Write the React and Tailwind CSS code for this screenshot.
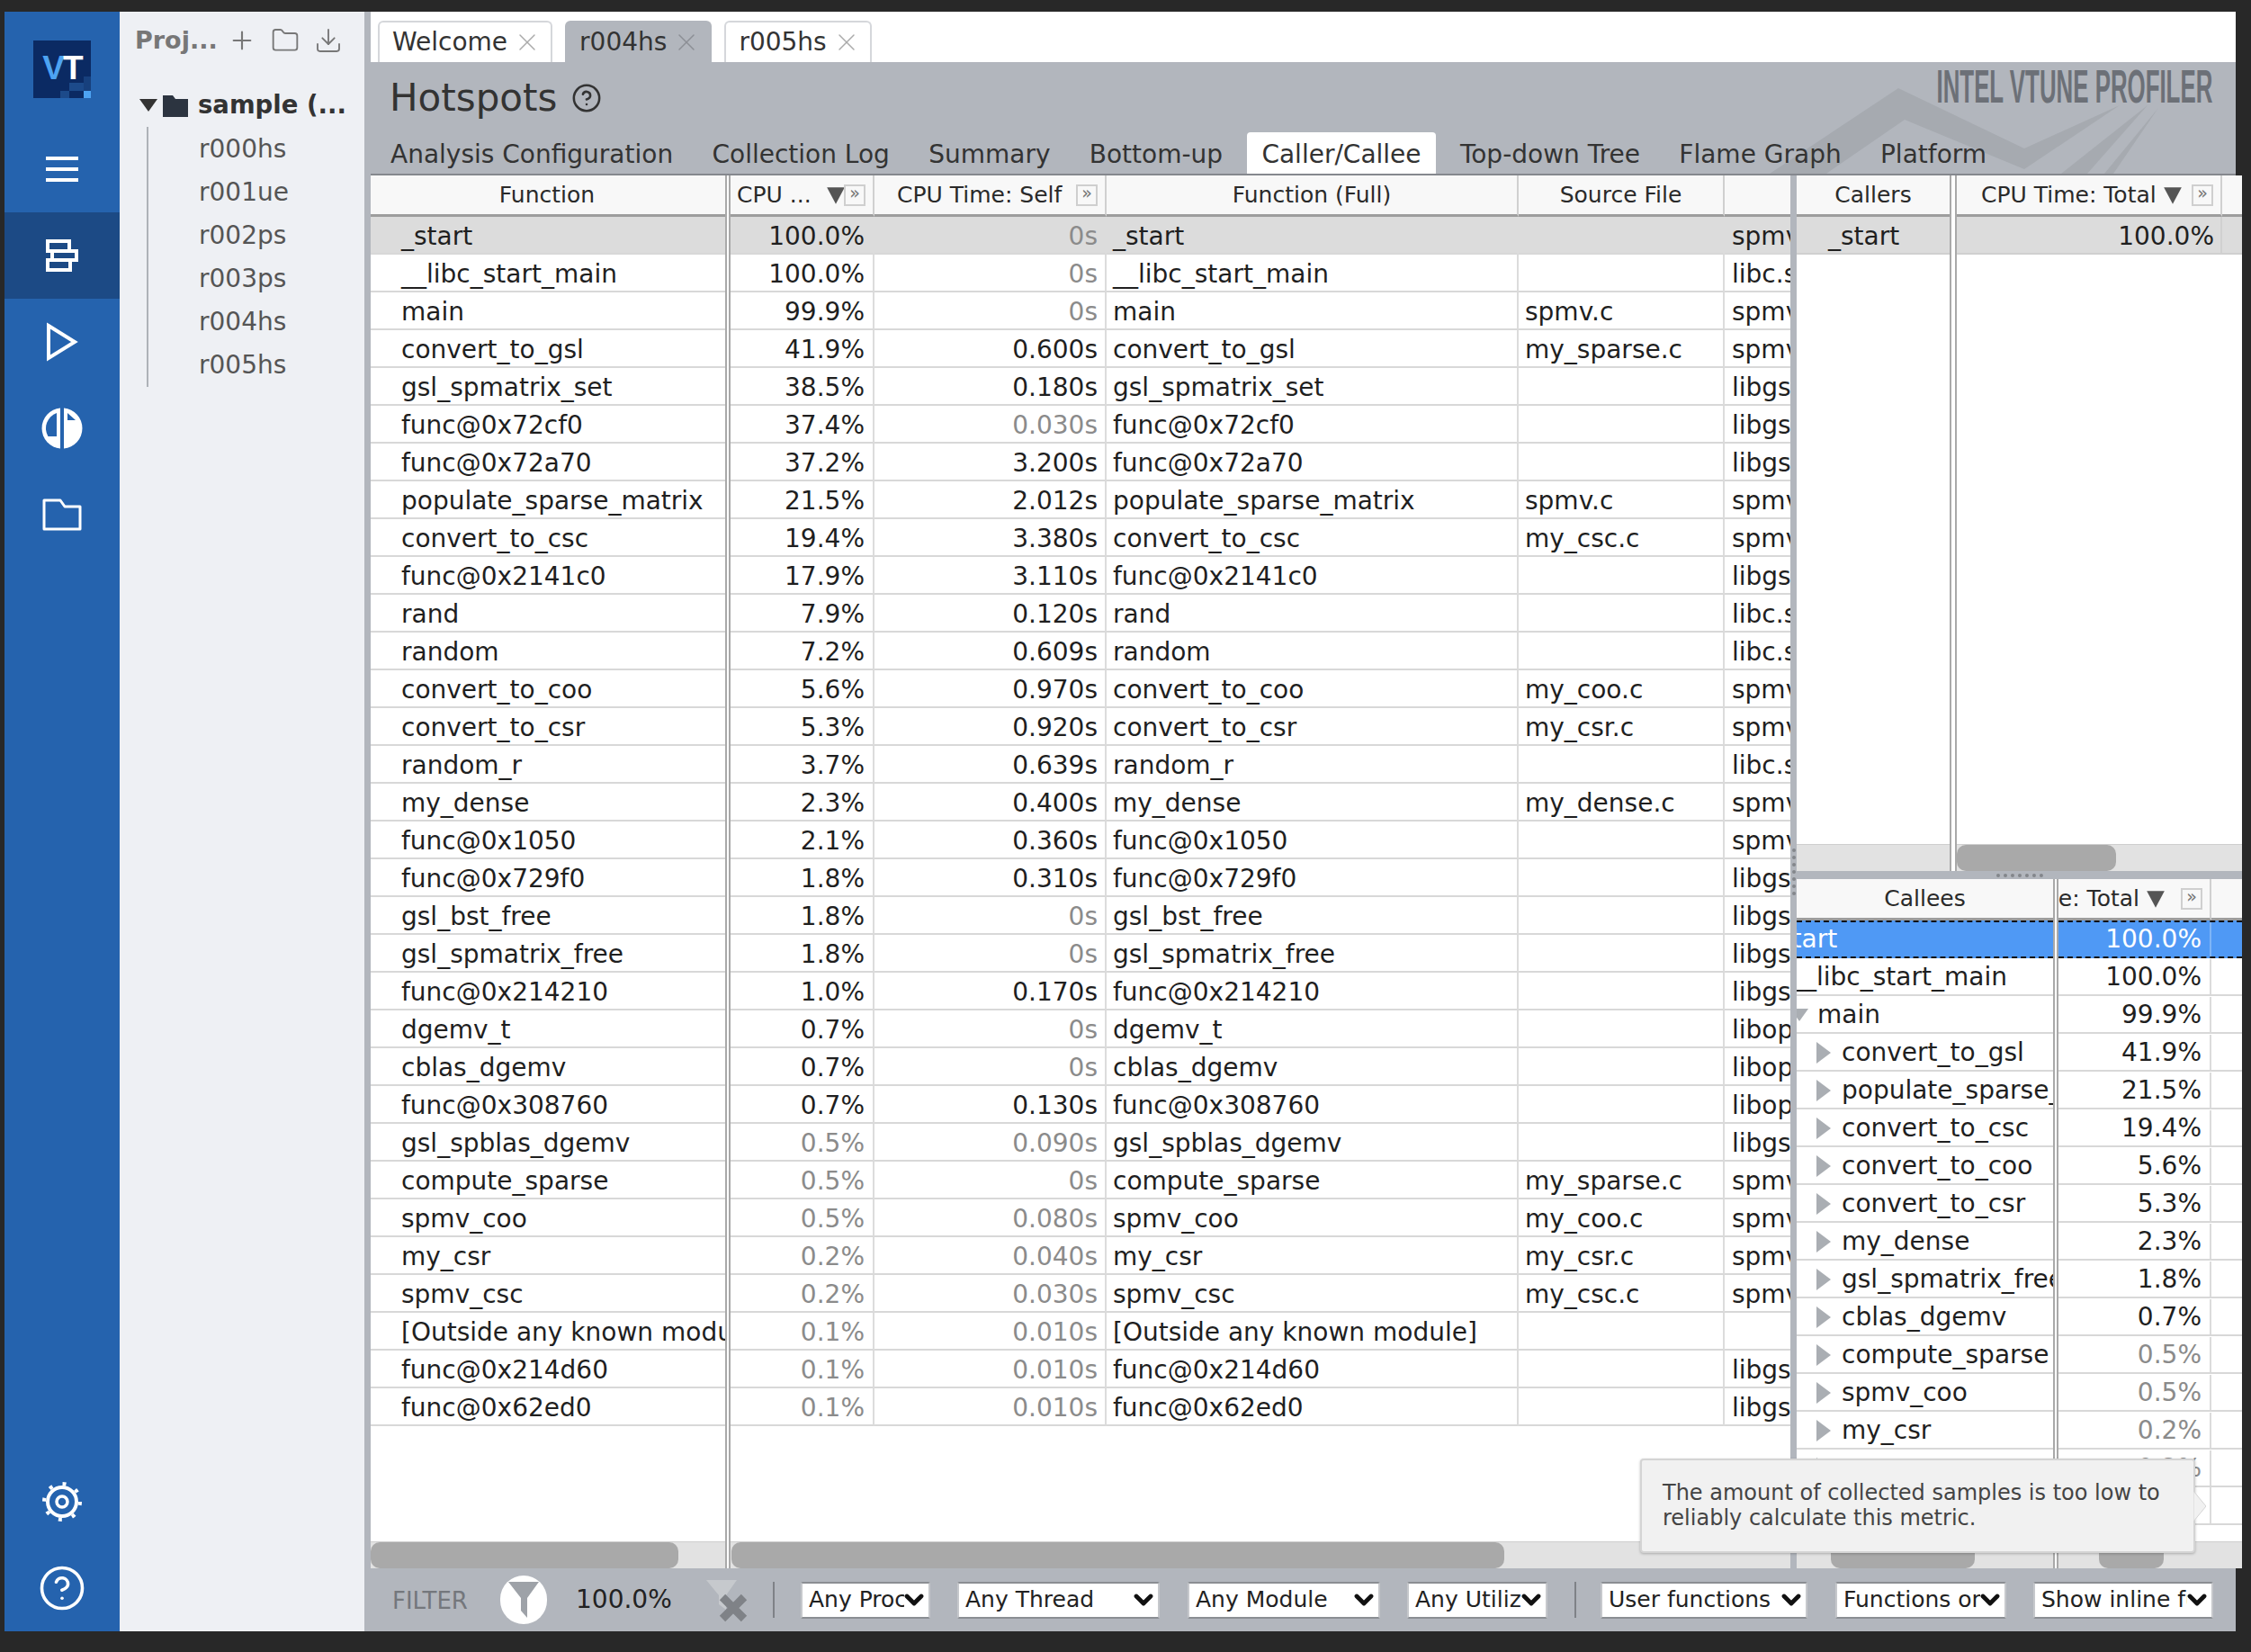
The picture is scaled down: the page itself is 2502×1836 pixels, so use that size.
import React from "react";
import { X, Plus, Folder, Download, CircleHelp, ChevronDown } from "lucide-react";

const rows = [
  ["_start","100.0%",0,"0s",1,"","spmv"],
  ["__libc_start_main","100.0%",0,"0s",1,"","libc.so"],
  ["main","99.9%",0,"0s",1,"spmv.c","spmv"],
  ["convert_to_gsl","41.9%",0,"0.600s",0,"my_sparse.c","spmv"],
  ["gsl_spmatrix_set","38.5%",0,"0.180s",0,"","libgsl"],
  ["func@0x72cf0","37.4%",0,"0.030s",1,"","libgsl"],
  ["func@0x72a70","37.2%",0,"3.200s",0,"","libgsl"],
  ["populate_sparse_matrix","21.5%",0,"2.012s",0,"spmv.c","spmv"],
  ["convert_to_csc","19.4%",0,"3.380s",0,"my_csc.c","spmv"],
  ["func@0x2141c0","17.9%",0,"3.110s",0,"","libgsl"],
  ["rand","7.9%",0,"0.120s",0,"","libc.so"],
  ["random","7.2%",0,"0.609s",0,"","libc.so"],
  ["convert_to_coo","5.6%",0,"0.970s",0,"my_coo.c","spmv"],
  ["convert_to_csr","5.3%",0,"0.920s",0,"my_csr.c","spmv"],
  ["random_r","3.7%",0,"0.639s",0,"","libc.so"],
  ["my_dense","2.3%",0,"0.400s",0,"my_dense.c","spmv"],
  ["func@0x1050","2.1%",0,"0.360s",0,"","spmv"],
  ["func@0x729f0","1.8%",0,"0.310s",0,"","libgsl"],
  ["gsl_bst_free","1.8%",0,"0s",1,"","libgsl"],
  ["gsl_spmatrix_free","1.8%",0,"0s",1,"","libgsl"],
  ["func@0x214210","1.0%",0,"0.170s",0,"","libgsl"],
  ["dgemv_t","0.7%",0,"0s",1,"","libopenblas"],
  ["cblas_dgemv","0.7%",0,"0s",1,"","libopenblas"],
  ["func@0x308760","0.7%",0,"0.130s",0,"","libopenblas"],
  ["gsl_spblas_dgemv","0.5%",1,"0.090s",1,"","libgsl"],
  ["compute_sparse","0.5%",1,"0s",1,"my_sparse.c","spmv"],
  ["spmv_coo","0.5%",1,"0.080s",1,"my_coo.c","spmv"],
  ["my_csr","0.2%",1,"0.040s",1,"my_csr.c","spmv"],
  ["spmv_csc","0.2%",1,"0.030s",1,"my_csc.c","spmv"],
  ["[Outside any known module]","0.1%",1,"0.010s",1,"",""],
  ["func@0x214d60","0.1%",1,"0.010s",1,"","libgsl"],
  ["func@0x62ed0","0.1%",1,"0.010s",1,"","libgsl"],
];

const callees = [
  ["populate_sparse_matrix","21.5%",0],
  ["convert_to_csc","19.4%",0],
  ["convert_to_coo","5.6%",0],
  ["convert_to_csr","5.3%",0],
  ["my_dense","2.3%",0],
  ["gsl_spmatrix_free","1.8%",0],
  ["cblas_dgemv","0.7%",0],
  ["compute_sparse","0.5%",1],
  ["spmv_coo","0.5%",1],
  ["my_csr","0.2%",1],
  ["spmv_csc","0.2%",1],
];

const rowLine = "h-[42px] border-b-2 border-[#d8d8d8] flex items-center whitespace-nowrap overflow-hidden";
const mainLine = rowLine + " pt-[4px]";
const calleeLine = rowLine + " pt-[1px]";

function Expand() {
  return (
    <span className="flex items-center justify-center w-[24px] h-[24px] border-2 border-[#cfcfcf] text-[19px] leading-none text-[#777] shrink-0 pb-[5px]">»</span>
  );
}

function Sort() {
  return (
    <svg width="24" height="22" viewBox="0 0 22 20" className="shrink-0">
      <path d="M2 2H20L11 19Z" fill="#555" />
    </svg>
  );
}

function HeadCell({ className, children }) {
  return (
    <div className={"h-[46px] bg-[#f8f8f8] border-b-[3px] border-[#9d9d9d] flex items-center text-[25px] text-[#2a2a2a] whitespace-nowrap overflow-hidden " + className}>
      {children}
    </div>
  );
}

function Splitter({ className }) {
  return <div className={"shrink-0 h-full border-x-2 border-[#a9a9a9] bg-white " + className} />;
}

function ScrollTrack({ children, className = "" }) {
  return <div className={"h-[30px] shrink-0 bg-[#e2e2e2] flex border-t border-[#cfcfcf] " + className}>{children}</div>;
}

function Thumb({ className }) {
  return <div className={"h-full bg-[#a9a9a9] rounded-[10px] " + className} />;
}

function Sidebar() {
  return (
    <div className="w-[128px] h-full shrink-0 bg-[#2563ae] flex flex-col items-center text-white">
      <div className="relative w-[64px] h-[64px] mt-[32px] mb-[31px] bg-[#0b2a63] flex justify-center pt-[13px] shrink-0 overflow-hidden font-['Liberation_Sans',sans-serif] font-bold text-[37px] leading-[36px] tracking-[-2px]">
        <span className="text-[#4da3f2]">V</span>
        <span className="text-white">T</span>
        <div className="absolute right-0 bottom-0 w-[8px] h-[8px] bg-[#4da3f2]" />
        <div className="absolute right-[8px] bottom-[8px] w-[16px] h-[9px] bg-[#1c4a8a]" />
        <div className="absolute right-[24px] bottom-0 w-[10px] h-[8px] bg-[#1c4a8a]" />
        <div className="absolute right-0 bottom-[8px] w-[8px] h-[16px] bg-[#17407d]" />
      </div>
      <div className="h-[96px] w-full flex items-center justify-center shrink-0">
        <svg width="38" height="30" viewBox="0 0 38 30"><path d="M1 3H37M1 15H37M1 27H37" stroke="#fff" strokeWidth="4" /></svg>
      </div>
      <div className="h-[96px] w-full flex items-center justify-center shrink-0 bg-[#1c4a85]">
        <svg width="36" height="36" viewBox="0 0 36 36" fill="none" stroke="#fff" strokeWidth="4">
          <rect x="2" y="2" width="24" height="11" />
          <rect x="7" y="13" width="27" height="10" />
          <rect x="2" y="23" width="25" height="11" />
        </svg>
      </div>
      <div className="h-[96px] w-full flex items-center justify-center shrink-0">
        <svg width="36" height="44" viewBox="0 0 36 44" fill="none" stroke="#fff" strokeWidth="4"><path d="M3 4L32 22L3 40Z" /></svg>
      </div>
      <div className="h-[96px] w-full flex items-center justify-center shrink-0">
        <svg width="46" height="46" viewBox="-23 -23 46 46">
          <path d="M-2-22.5A22.6 22.6 0 0 0-2 22.5Z" fill="#fff" />
          <path d="M-6-17A18 18 0 0 0-15.6 9L-6 9Z" fill="#2563ae" />
          <path d="M2-22.5A22.6 22.6 0 0 1 2 22.5Z" fill="#fff" />
          <path d="M6-17L15-9L6-9Z" fill="#2563ae" />
        </svg>
      </div>
      <div className="h-[96px] w-full flex items-center justify-center shrink-0">
        <svg width="44" height="36" viewBox="0 0 44 36" fill="none" stroke="#fff" strokeWidth="3" strokeLinejoin="round"><path d="M2 2H20L25 9H42V34H2Z" /></svg>
      </div>
      <div className="mt-auto h-[96px] w-full flex items-center justify-center shrink-0">
        <svg width="44" height="44" viewBox="0 0 44 44" fill="none" stroke="#fff">
          <circle cx="22" cy="22" r="16" strokeWidth="4" />
          <circle cx="22" cy="22" r="20" strokeWidth="4" strokeDasharray="4 11.7" />
          <circle cx="22" cy="22" r="6" strokeWidth="3.5" />
        </svg>
      </div>
      <div className="h-[96px] w-full flex items-center justify-center shrink-0">
        <CircleHelp size={54} strokeWidth={1.6} />
      </div>
    </div>
  );
}

function ProjectPanel() {
  const items = ["r000hs", "r001ue", "r002ps", "r003ps", "r004hs", "r005hs"];
  return (
    <div className="w-[272px] h-full shrink-0 bg-[#eef0f4] flex flex-col">
      <div className="h-[64px] flex items-center pl-[17px] text-[#777] shrink-0">
        <span className="font-bold text-[27px] w-[103px]">Proj...</span>
        <Plus size={32} strokeWidth={1.6} />
        <Folder size={32} strokeWidth={1.4} className="ml-[16px]" />
        <Download size={32} strokeWidth={1.4} className="ml-[16px]" />
      </div>
      <div className="h-[40px] mt-[20px] flex items-center pl-[22px] shrink-0">
        <svg width="20" height="14" viewBox="0 0 20 14"><path d="M0 0H20L10 14Z" fill="#333" /></svg>
        <svg width="28" height="26" viewBox="0 0 28 26" className="ml-[6px]"><path d="M0 2H11L14 6H28V26H0Z" fill="#2c3440" /></svg>
        <span className="ml-[11px] font-bold text-[27.5px] text-[#333] whitespace-nowrap">sample (...</span>
      </div>
      <div className="ml-[30px] mt-[4px] border-l-2 border-[#aeb2b8] h-[289px] pl-[56px] flex flex-col text-[28px] text-[#555] shrink-0">
        {items.map((t) => (
          <div key={t} className="h-[48px] flex items-center pt-[2px]">{t}</div>
        ))}
      </div>
    </div>
  );
}

function TopTab({ label, active }) {
  return (
    <div className={"h-[46px] flex items-center pl-[14px] pr-[14px] rounded-t-[6px] border-2 border-b-0 text-[28px] gap-[10px] " + (active ? "bg-[#b2b6bd] border-[#b2b6bd] text-[#333]" : "bg-white border-[#d5d7db] text-[#333]")}>
      <span>{label}</span>
      <X size={32} strokeWidth={1.1} className={"-mx-[4px] " + (active ? "text-[#8c8f95]" : "text-[#aaa]")} />
    </div>
  );
}

function Header() {
  const tabs = ["Analysis Configuration", "Collection Log", "Summary", "Bottom-up", "Caller/Callee", "Top-down Tree", "Flame Graph", "Platform"];
  return (
    <div className="relative h-[126px] shrink-0 bg-[#b2b6bd] border-b-2 border-[#85888e] overflow-hidden flex flex-col">
      <svg className="absolute left-[1490px] top-0" width="583" height="124" viewBox="1902 69 583 124" fill="#a6aab0">
        <path d="M1967 193L2110 98L2250 165L2356 117L2250 188L2117 133L2030 193Z" />
        <path d="M2291 193L2387 117L2320 193Z" />
        <path d="M2339 193L2399 120L2349 193Z" />
      </svg>
      <div className="absolute right-[26px] top-[1px] h-[52px] text-[#6c7077] font-['Liberation_Sans',sans-serif] font-bold text-[52px] leading-[52px] whitespace-nowrap origin-right scale-x-[0.497]">
        INTEL VTUNE PROFILER
      </div>
      <div className="relative h-[78px] flex items-center pl-[21px] pt-[1px] shrink-0 text-[#333]">
        <span className="text-[42px] leading-[50px]">Hotspots</span>
        <CircleHelp size={34} strokeWidth={1.8} className="ml-[16px]" />
      </div>
      <div className="relative h-[46px] flex items-stretch pl-[6px] gap-[11.3px] text-[28px] text-[#333] shrink-0">
        {tabs.map((t) => (
          <div key={t} className={"px-[16px] pt-[3px] flex items-center whitespace-nowrap rounded-t-[4px] " + (t === "Caller/Callee" ? "bg-white" : "")}>{t}</div>
        ))}
      </div>
    </div>
  );
}

function MainTable() {
  return (
    <div className="w-[1578px] h-full shrink-0 flex text-[28px] text-[#1f1f1f]">
      <div className="w-[394px] shrink-0 flex flex-col">
        <HeadCell className="justify-center pr-[2px]">Function</HeadCell>
        {rows.map((r, i) => (
          <div key={i} className={mainLine + " pl-[34px] " + (i === 0 ? "bg-[#dcdcdc]" : "bg-white")}>{r[0]}</div>
        ))}
        <div className="flex-1 bg-white" />
        <ScrollTrack><Thumb className="w-[342px]" /></ScrollTrack>
      </div>
      <Splitter className="w-[6px]" />
      <div className="w-[1178px] shrink-0 flex flex-col overflow-hidden">
        <div className="flex shrink-0">
          <HeadCell className="w-[160px] border-r-2 border-r-[#d0d0d0] pl-[7px] pr-[8px]">
            <span>CPU ...</span>
            <span className="ml-auto flex items-center -space-x-[3px]"><Sort /><Expand /></span>
          </HeadCell>
          <HeadCell className="w-[258px] border-r-2 border-r-[#d0d0d0] pl-[25px] pr-[8px]">
            <span>CPU Time: Self</span>
            <span className="ml-auto"><Expand /></span>
          </HeadCell>
          <HeadCell className="w-[458px] border-r-2 border-r-[#d0d0d0] justify-center">Function (Full)</HeadCell>
          <HeadCell className="w-[229px] border-r-2 border-r-[#d0d0d0] justify-center">Source File</HeadCell>
          <HeadCell className="w-[73px]" />
        </div>
        {rows.map((r, i) => (
          <div key={i} className={"flex shrink-0 " + (i === 0 ? "bg-[#dcdcdc]" : "bg-white")}>
            <div className={mainLine + " w-[160px] justify-end pr-[9px] border-r-2 border-r-[#dcdcdc] " + (r[2] ? "text-[#8b8b8b]" : "")}>{r[1]}</div>
            <div className={mainLine + " w-[258px] justify-end pr-[8px] border-r-2 border-r-[#dcdcdc] " + (r[4] ? "text-[#8b8b8b]" : "")}>{r[3]}</div>
            <div className={mainLine + " w-[458px] pl-[7px] border-r-2 border-r-[#dcdcdc]"}>{r[0]}</div>
            <div className={mainLine + " w-[229px] pl-[7px] border-r-2 border-r-[#dcdcdc]"}>{r[5]}</div>
            <div className={mainLine + " w-[73px] pl-[8px]"}>{r[6]}</div>
          </div>
        ))}
        <div className="flex-1 bg-white" />
        <ScrollTrack><Thumb className="ml-[1px] w-[859px]" /></ScrollTrack>
      </div>
    </div>
  );
}

function Callers() {
  return (
    <div className="h-[773px] shrink-0 flex text-[28px] text-[#1f1f1f] overflow-hidden">
      <div className="w-[170px] shrink-0 flex flex-col">
        <HeadCell className="justify-center">Callers</HeadCell>
        <div className="h-[42px] bg-[#dcdcdc] border-b-2 border-[#d0d0d0] pl-[35px] pt-[4px] flex items-center">_start</div>
        <div className="flex-1 bg-white" />
        <ScrollTrack />
      </div>
      <Splitter className="w-[8px]" />
      <div className="flex-1 flex flex-col">
        <div className="flex shrink-0">
          <HeadCell className="w-[295px] border-r-2 border-r-[#d0d0d0] pl-[27px] pr-[8px]">
            <span>CPU Time: Total</span>
            <span className="ml-[6px]"><Sort /></span>
            <span className="ml-auto"><Expand /></span>
          </HeadCell>
          <HeadCell className="flex-1" />
        </div>
        <div className="flex h-[42px] bg-[#dcdcdc] border-b-2 border-[#d0d0d0] shrink-0">
          <div className="w-[295px] flex items-center justify-end pr-[7px] pt-[4px] border-r-2 border-r-[#d0d0d0]">100.0%</div>
        </div>
        <div className="flex-1 bg-white" />
        <ScrollTrack><Thumb className="w-[177px]" /></ScrollTrack>
      </div>
    </div>
  );
}

function Arrow() {
  return <svg width="16" height="24" viewBox="0 0 16 24" className="shrink-0"><path d="M0 0L16 12L0 24Z" fill="#aaaeb3" /></svg>;
}

function Callees() {
  return (
    <div className="flex-1 flex text-[28px] text-[#1f1f1f] overflow-hidden min-h-0">
      <div className="w-[285px] shrink-0 flex flex-col overflow-hidden">
        <HeadCell className="justify-center h-[44px]">Callees</HeadCell>
        <div className="h-[42px] bg-[#4f99f5] text-white border-y-2 border-dashed border-[#111] flex items-center whitespace-nowrap overflow-hidden"><span className="-ml-[34px]">_start</span></div>
        <div className={calleeLine + " bg-white"}><span className="-ml-[6px]">__libc_start_main</span></div>
        <div className={calleeLine + " bg-white"}>
          <svg width="20" height="14" viewBox="0 0 20 14" className="-ml-[7px] shrink-0"><path d="M0 0H20L10 14Z" fill="#aaaeb3" /></svg>
          <span className="ml-[10px]">main</span>
        </div>
        <div className={calleeLine + " bg-white pl-[22px]"}><Arrow /><span className="ml-[12px]">convert_to_gsl</span></div>
        {callees.map((c) => (
          <div key={c[0]} className={calleeLine + " bg-white pl-[22px]"}><Arrow /><span className="ml-[12px]">{c[0]}</span></div>
        ))}
        <div className={rowLine + " bg-white"} />
        <div className="flex-1 bg-white" />
        <ScrollTrack><Thumb className="ml-[38px] w-[160px]" /></ScrollTrack>
      </div>
      <Splitter className="w-[6px]" />
      <div className="flex-1 flex flex-col overflow-hidden">
        <div className="flex shrink-0">
          <HeadCell className="w-[170px] border-r-2 border-r-[#d0d0d0] justify-end pr-[8px]">
            <span className="shrink-0">CPU Time: Total</span>
            <span className="ml-[6px] shrink-0"><Sort /></span>
            <span className="ml-[16px] shrink-0"><Expand /></span>
          </HeadCell>
          <HeadCell className="flex-1" />
        </div>
        <div className="flex h-[42px] bg-[#4f99f5] text-white border-y-2 border-dashed border-[#111] shrink-0">
          <div className="w-[170px] flex items-center justify-end pr-[9px] border-r-2 border-r-[#7fb5f7]">100.0%</div>
        </div>
        {[["100.0%",0],["99.9%",0],["41.9%",0]].concat(callees.map((c) => [c[1], c[2]])).map((c, i) => (
          <div key={i} className={calleeLine + " bg-white"}>
            <div className={"w-[170px] h-full flex items-center justify-end pr-[9px] border-r-2 border-r-[#dcdcdc] " + (c[1] ? "text-[#8b8b8b]" : "")}>{c[0]}</div>
          </div>
        ))}
        <div className={rowLine + " bg-white"}>
          <div className="w-[170px] h-full border-r-2 border-r-[#dcdcdc]" />
        </div>
        <div className="flex-1 bg-white" />
        <ScrollTrack><Thumb className="ml-[45px] w-[72px]" /></ScrollTrack>
      </div>
    </div>
  );
}

function Sel({ w, label }) {
  return (
    <div className={"h-[41px] bg-white border-2 border-[#8b8e93] border-x-[#c6c8cc] rounded-[2px] flex items-center pl-[7px] pr-[5px] text-[25px] text-[#222] shrink-0 " + w}>
      <span className="flex-1 overflow-hidden whitespace-nowrap">{label}</span>
      <ChevronDown size={32} strokeWidth={3.6} className="shrink-0 text-[#111] -mx-[5px]" />
    </div>
  );
}

function Footer() {
  return (
    <div className="h-[70px] shrink-0 bg-[#b2b6bd] flex items-center pl-[24px]">
      <span className="text-[26px] text-[#74777c] w-[120px] pt-[2px] shrink-0">FILTER</span>
      <div className="w-[52px] h-[54px] rounded-full bg-white flex items-center justify-center shrink-0">
        <svg width="34" height="44" viewBox="0 0 34 44"><path d="M0 2H34L21 20V42L14 34V20Z" fill="#9ea2a8" /></svg>
      </div>
      <span className="ml-[32px] text-[28px] text-[#222] w-[145px] shrink-0">100.0%</span>
      <svg width="50" height="50" viewBox="0 0 50 50" className="shrink-0">
        <path d="M0 3H34L22 20V36L14 30V20Z" fill="#c6c9cd" />
        <path d="M18 22L42 46M42 22L18 46" stroke="#7f8287" strokeWidth="9" />
      </svg>
      <div className="ml-[24px] mr-[29px] w-[2px] h-[40px] bg-[#7f8287] shrink-0" />
      <Sel w="w-[144px]" label="Any Process" />
      <div className="w-[30px] shrink-0" />
      <Sel w="w-[225px]" label="Any Thread" />
      <div className="w-[31px] shrink-0" />
      <Sel w="w-[214px]" label="Any Module" />
      <div className="w-[30px] shrink-0" />
      <Sel w="w-[156px]" label="Any Utilization" />
      <div className="ml-[30px] mr-[27px] w-[2px] h-[40px] bg-[#7f8287] shrink-0" />
      <Sel w="w-[230px]" label="User functions" />
      <div className="w-[31px] shrink-0" />
      <Sel w="w-[190px]" label="Functions only" />
      <div className="w-[30px] shrink-0" />
      <Sel w="w-[200px]" label="Show inline functions" />
    </div>
  );
}

export default function App() {
  return (
    <div className="relative w-[2502px] h-[1836px] bg-[#282828] pt-[13px] pl-[5px] pr-[17px] pb-[23px] flex font-['DejaVu_Sans',sans-serif] overflow-hidden">
      <Sidebar />
      <ProjectPanel />
      <div className="w-[7px] h-full shrink-0 bg-[#b2b6bd]" />
      <div className="flex-1 h-full flex flex-col min-w-0">
        <div className="h-[56px] shrink-0 bg-white flex items-end pl-[8px] gap-[14px]">
          <TopTab label="Welcome" />
          <TopTab label="r004hs" active />
          <TopTab label="r005hs" />
        </div>
        <Header />
        <div className="h-[1548px] flex shrink-0">
          <MainTable />
          <div className="relative w-[7px] h-full shrink-0 bg-[#b2b6bd] flex flex-col items-center">
            <div className="mt-[748px] h-[52px] border-l-4 border-dotted border-[#83868b]" />
          </div>
          <div className="w-[495px] h-full shrink-0 flex flex-col">
            <Callers />
            <div className="h-[9px] bg-[#b2b6bd] shrink-0 flex justify-center">
              <div className="mt-[3px] w-[52px] h-[4px] border-t-4 border-dotted border-[#83868b]" />
            </div>
            <Callees />
          </div>
        </div>
        <Footer />
      </div>
      <div className="absolute left-[1823px] top-[1621px] w-[617px] h-[105px] bg-[#f1f1f1] border-2 border-[#d4d4d4] rounded-[4px] shadow-[0_1px_3px_rgba(0,0,0,0.25)] pl-[23px] pr-[16px] pt-[22px] text-[24px] leading-[28px] text-[#444]">
        The amount of collected samples is too low to reliably calculate this metric.
        <svg width="14" height="34" viewBox="0 0 14 34" className="absolute -right-[14px] top-[34px]">
          <path d="M0 0L14 17L0 34Z" fill="#f1f1f1" stroke="#d4d4d4" />
        </svg>
      </div>
    </div>
  );
}
